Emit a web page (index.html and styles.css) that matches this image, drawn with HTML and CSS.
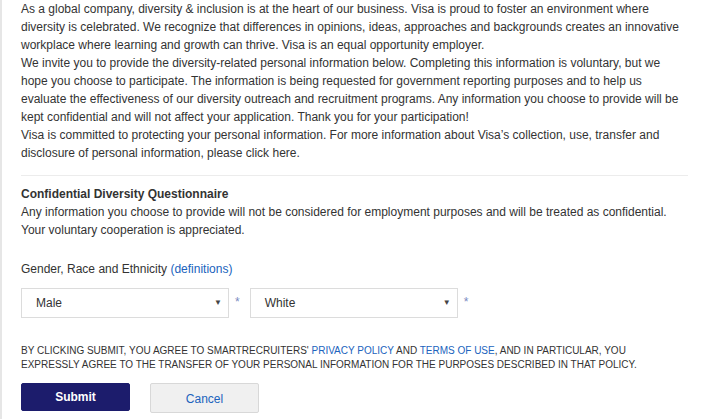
FILE: index.html
```html
<!DOCTYPE html>
<html>
<head>
<meta charset="utf-8">
<link rel="stylesheet" href="styles.css">
</head>
<body>
<div class="page">
  <p class="intro">As a global company, diversity &amp; inclusion is at the heart of our business. Visa is proud to foster an environment where diversity is celebrated. We recognize that differences in opinions, ideas, approaches and backgrounds creates an innovative workplace where learning and growth can thrive. Visa is an equal opportunity employer.<br>We invite you to provide the diversity-related personal information below. Completing this information is voluntary, but we hope you choose to participate. The information is being requested for government reporting purposes and to help us evaluate the effectiveness of our diversity outreach and recruitment programs. Any information you choose to provide will be kept confidential and will not affect your application. Thank you for your participation!<br>Visa is committed to protecting your personal information. For more information about Visa’s collection, use, transfer and disclosure of personal information, please click here.</p>
  <hr class="divider">
  <h2 class="title">Confidential Diversity Questionnaire</h2>
  <p class="note">Any information you choose to provide will not be considered for employment purposes and will be treated as confidential. Your voluntary cooperation is appreciated.</p>
  <div class="label">Gender, Race and Ethnicity <a class="link" href="#">(definitions)</a></div>
  <div class="fields">
    <div class="field">
      <div class="select"><span>Male</span><span class="arrow">▼</span></div>
      <span class="req">*</span>
    </div>
    <div class="field">
      <div class="select"><span>White</span><span class="arrow">▼</span></div>
      <span class="req">*</span>
    </div>
  </div>
  <p class="legal">By clicking submit, you agree to SmartRecruiters' <a class="link" href="#">Privacy Policy</a> and <a class="link" href="#">Terms of Use</a>, and in particular, you expressly agree to the transfer of your personal information for the purposes described in that policy.</p>
  <div class="actions">
    <button class="btn btn-primary">Submit</button>
    <button class="btn btn-secondary">Cancel</button>
  </div>
</div>
</body>
</html>
```
FILE: styles.css
```css
html, body {
  margin: 0;
  padding: 0;
  background: #fff;
}
body {
  font-family: "Liberation Sans", Arial, sans-serif;
  font-size: 12px;
  line-height: 18px;
  color: #333;
}
.page {
  border-left: 2px solid #e6e6e6;
  padding: 0 18px 0 19px;
  min-height: 419px;
  box-sizing: border-box;
}
.intro {
  margin: 0;
}
.divider {
  border: 0;
  border-top: 1px solid #ececec;
  margin: 13px 0 0;
  height: 0;
}
.title {
  font-size: 12px;
  font-weight: bold;
  line-height: 18px;
  margin: 9px 0 0;
}
.note {
  margin: 0;
}
.label {
  margin-top: 21px;
}
.link {
  color: #2063bd;
  text-decoration: none;
}
.fields {
  display: flex;
  gap: 10px;
  margin-top: 10px;
}
.field {
  display: flex;
  align-items: flex-start;
  gap: 6px;
}
.select {
  width: 208px;
  height: 30px;
  box-sizing: border-box;
  border: 1px solid #dcdcdc;
  display: flex;
  align-items: center;
  justify-content: space-between;
  padding: 0 6px 0 14px;
  color: #333;
}
.arrow {
  font-size: 8px;
  color: #444;
}
.req {
  color: #7b8bbf;
  font-size: 12px;
  line-height: 18px;
  margin-top: 5px;
}
.legal {
  margin: 26px 0 0;
  max-width: 640px;
  font-size: 10px;
  line-height: 14px;
  text-transform: uppercase;
}
.actions {
  display: flex;
  align-items: flex-start;
  gap: 20px;
  margin-top: 11px;
}
.btn {
  width: 109px;
  height: 28px;
  font-family: "Liberation Sans", Arial, sans-serif;
  font-size: 12px;
  border-radius: 2px;
  padding: 0;
  box-sizing: border-box;
}
.btn-primary {
  background: #1c1c6c;
  color: #fff;
  border: 1px solid #1c1c6c;
  font-weight: bold;
}
.btn-secondary {
  background: #f0f0f0;
  color: #2063bd;
  border: 1px solid #d8d8d8;
  height: 30px;
  padding-top: 2px;
}
```
